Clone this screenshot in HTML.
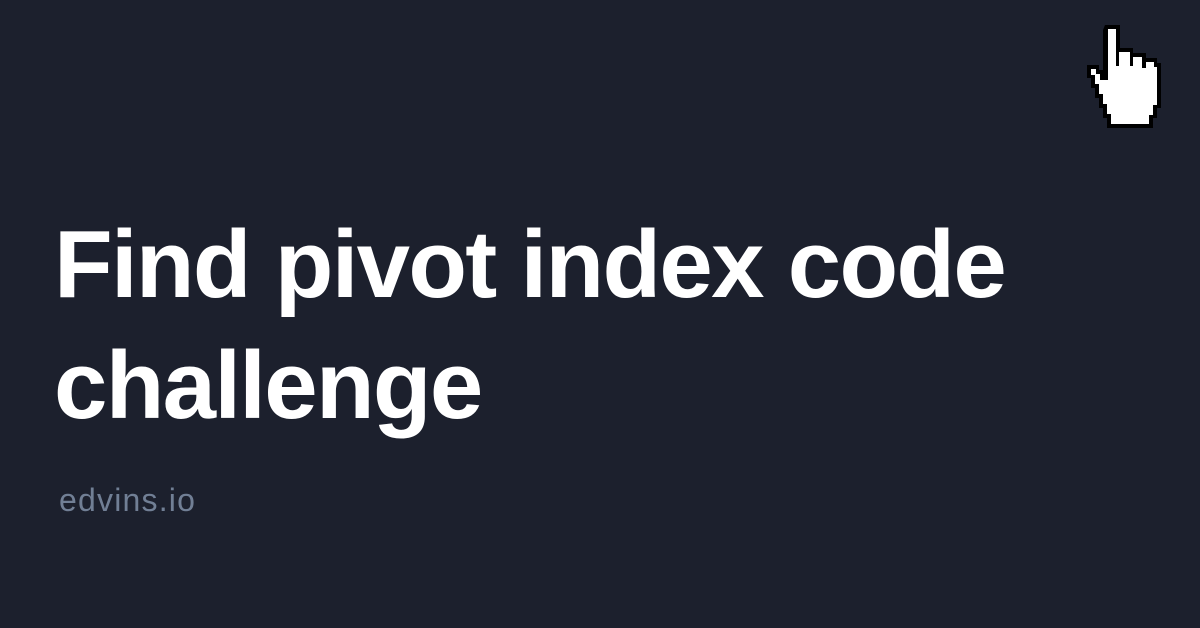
<!DOCTYPE html>
<html><head><meta charset="utf-8"><style>
html,body{margin:0;padding:0}
body{width:1200px;height:628px;background:#1c202d;position:relative;overflow:hidden;font-family:"Liberation Sans",sans-serif}
h1{position:absolute;left:54px;top:204px;margin:0;font-size:96px;line-height:121px;font-weight:700;color:#fff;letter-spacing:-1.7px;width:1050px}
.s{position:absolute;left:59px;top:482px;font-size:32px;color:#717f95;letter-spacing:1.2px}
svg{position:absolute;left:0;top:0}
</style></head><body>
<h1>Find pivot index code<br>challenge</h1>
<div class="s">edvins.io</div>
<svg width="1200" height="628">
<polygon fill="#000" points="1105,25 1120,25 1120,48 1133,48 1133,53 1146,53 1146,58 1157,58 1157,63 1161,63 1161,108 1157,108 1157,118 1153,118 1153,128 1107,128 1107,118 1103,118 1103,108 1099,108 1099,98 1095,98 1095,88 1091,88 1091,78 1087,78 1087,65 1099,65 1099,70 1103,70 1103,30"/>
<polygon fill="#fff" points="1108,29 1116,29 1116,66 1119,66 1119,52 1130,52 1130,66 1133,66 1133,57 1142,57 1142,68 1146,68 1146,62 1154,62 1154,67 1157,67 1157,105 1153,105 1153,115 1149,115 1149,124 1111,124 1111,114 1107,114 1107,104 1103,104 1103,94 1099,94 1099,84 1095,84 1095,75 1091,75 1091,69 1096,69 1096,74 1100,74 1100,80 1108,80"/>
</svg>
</body></html>
